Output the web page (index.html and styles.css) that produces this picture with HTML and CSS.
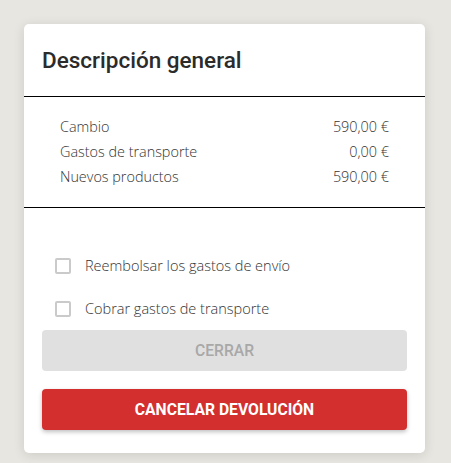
FILE: index.html
```html
<!DOCTYPE html>
<html>
  <head>
    <title>Descripción general</title>
    <link rel="stylesheet" href="styles.css">
  </head>
  <body>
    <div class="card">
      <div class="header">
        <h1>Descripción general</h1>
      </div>

      <div class="summary">
        <div class="row"><span>Cambio</span><span>590,00 €</span></div>
        <div class="row"><span>Gastos de transporte</span><span>0,00 €</span></div>
        <div class="row"><span>Nuevos productos</span><span>590,00 €</span></div>
      </div>

      <div class="options">
        <label class="check"><span class="box"></span>Reembolsar los gastos de envío</label>
        <label class="check"><span class="box"></span>Cobrar gastos de transporte</label>

        <button class="btn btn-disabled">Cerrar</button>
        <button class="btn btn-danger">Cancelar devolución</button>
      </div>
    </div>
  </body>
</html>
```

FILE: styles.css
```css
body {
  margin: 0;
  padding: 24px;
  background-color: #e8e6e0;
  font-family: "Open Sans", sans-serif;
  color: #333;
}

.card {
  width: 401px;
  background-color: #fff;
  border-radius: 5px;
  box-shadow: 0 2px 12px rgba(0, 0, 0, 0.12);
}

.header {
  height: 72px;
  padding: 0 18px;
  display: flex;
  align-items: center;
  border-bottom: 1px solid #000;
}

h1 {
  margin: 0;
  font-family: Roboto, sans-serif;
  font-weight: 500;
  font-size: 22.5px;
  color: #2b2b2b;
}

.summary {
  padding: 17px 36px 18px;
  border-bottom: 1px solid #000;
}

.row {
  display: flex;
  justify-content: space-between;
  height: 25px;
  align-items: center;
  font-size: 14.4px;
  font-weight: 300;
}

.options {
  padding: 36px 18px 23px;
}

.check {
  display: flex;
  align-items: center;
  height: 43px;
  padding-left: 13px;
  font-size: 14.5px;
  font-weight: 300;
}

.box {
  width: 12px;
  height: 12px;
  border: 2px solid #cacaca;
  border-radius: 2px;
  margin-right: 14px;
}

.btn {
  display: block;
  width: 100%;
  height: 41px;
  border: none;
  border-radius: 4px;
  font-family: Roboto, sans-serif;
  font-size: 15.7px;
  text-transform: uppercase;
}

.btn-disabled {
  background-color: #e0e0e0;
  color: #a8a8a8;
  font-weight: 500;
}

.btn-danger {
  margin-top: 18px;
  background-color: #d32f2f;
  color: #fff;
  font-weight: 700;
  box-shadow: 0 2px 4px rgba(0, 0, 0, 0.25);
}
```
